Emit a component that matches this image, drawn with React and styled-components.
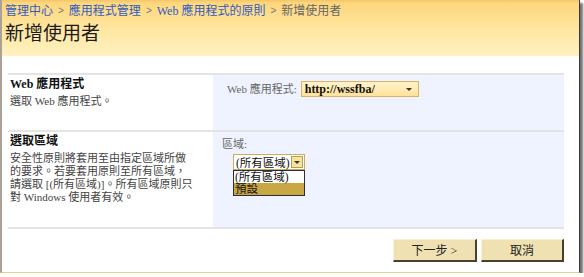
import styled, { createGlobalStyle } from "styled-components";

const Global = createGlobalStyle`
  html, body {
    margin: 0;
    padding: 0;
    background: #ffffff;
  }
  body {
    font-family: "Liberation Serif", "Noto Sans CJK TC", serif;
    color: #222;
  }
`;

const Frame = styled.div`
  box-sizing: border-box;
  width: 580px;
  height: 273px;
  background: #ffffff;
  border-left: 2px solid #aaa299;
  border-right: 1px solid #3a3a3a;
  border-bottom: 1px solid #e2d28c;
  box-shadow: 3px 3px 2px rgba(0, 0, 0, 0.55);
  display: flex;
  flex-direction: column;
`;

const Header = styled.div`
  height: 56px;
  padding: 2px 0 0 3px;
  box-sizing: border-box;
  background: linear-gradient(to bottom, #f3c56a 0px, #fdd67c 3px, #ffe7a2 30px, #fff1c0 56px);
`;

const Crumbs = styled.div`
  display: flex;
  align-items: center;
  height: 16px;
  font-size: 12px;
  white-space: nowrap;
`;

const Crumb = styled.span`
  color: ${(p) => (p.$current ? "#666" : "#2f5cc4")};
`;

const Sep = styled.span`
  font-family: "Liberation Sans", sans-serif;
  font-size: 10px;
  color: #777;
  padding: 0 5px;
`;

const Title = styled.h1`
  margin: 2px 0 0 0;
  font-family: "Noto Sans CJK TC", sans-serif;
  font-weight: 400;
  font-size: 19px;
  line-height: 24px;
  color: #1a1a1a;
`;

const Body = styled.div`
  padding: 17px 15px 0 6px;
  display: flex;
  flex-direction: column;
`;

const Section = styled.div`
  display: flex;
  height: ${(p) => p.$h}px;
  border-top: 2px solid #e4e4e4;
  ${(p) => p.$last && "border-bottom: 2px solid #e4e4e4;"}
`;

const Info = styled.div`
  width: 203px;
  padding: 1px 0 0 2px;
`;

const InfoTitle = styled.div`
  font-weight: 700;
  font-size: 12px;
  line-height: 16px;
  color: #111;
`;

const InfoText = styled.div`
  margin-top: 3px;
  font-size: 11px;
  line-height: 13px;
  color: #444;
`;

const Control = styled.div`
  flex: 1;
  background: #eff3ff;
  padding: ${(p) => p.$pad};
`;

const Field = styled.div`
  display: flex;
  align-items: center;
  gap: 4px;
`;

const FieldLabel = styled.div`
  font-size: 11px;
  line-height: 14px;
  color: #666;
`;

const UrlSelect = styled.div`
  box-sizing: border-box;
  width: 118px;
  height: 16px;
  border: 1px solid #d9b466;
  background: linear-gradient(to bottom, #fff3cc, #ffe29a);
  display: flex;
  align-items: center;
  justify-content: space-between;
  padding: 0 6px 0 3px;
  font-weight: 700;
  font-size: 12px;
  color: #111;
`;

const Caret = styled.span`
  width: 0;
  height: 0;
  border-left: 3px solid transparent;
  border-right: 3px solid transparent;
  border-top: 3px solid #333;
`;

const ZoneWrap = styled.div`
  position: relative;
  margin: 3px 0 0 11px;
  width: 72px;
`;

const ZoneSelect = styled.div`
  box-sizing: border-box;
  height: 16px;
  border: 1px solid #c8ad5c;
  background: #fff;
  display: flex;
  align-items: center;
  justify-content: space-between;
  padding-left: 2px;
  font-size: 11.5px;
  white-space: nowrap;
  color: #111;
`;

const ArrowBox = styled.span`
  box-sizing: border-box;
  flex: none;
  width: 12px;
  height: 12px;
  margin-right: 1px;
  background: #f6e49c;
  border: 1px solid #b89c50;
  display: flex;
  align-items: center;
  justify-content: center;
`;

const List = styled.div`
  position: absolute;
  top: 16px;
  left: 0;
  width: 72px;
  box-sizing: border-box;
  border: 1px solid #2b2b3a;
  background: #fff;
`;

const Option = styled.div`
  height: 12px;
  line-height: 12px;
  font-size: 11.5px;
  white-space: nowrap;
  padding-left: 1px;
  color: #111;
  background: ${(p) => (p.$active ? "#c9a744" : "#fff")};
`;

const Buttons = styled.div`
  display: flex;
  justify-content: flex-end;
  gap: 4px;
  margin-top: 10px;
`;

const Button = styled.button`
  width: ${(p) => p.$w}px;
  height: 23px;
  box-sizing: border-box;
  background: #efe1b2;
  border: 1px solid #f8f0d4;
  border-right: 2px solid #4a4030;
  border-bottom: 2px solid #4a4030;
  font-family: "Liberation Serif", "Noto Sans CJK TC", serif;
  font-size: 12px;
  color: #222;
  padding: 0;
`;

export default function App() {
  return (
    <>
      <Global />
      <Frame>
        <Header>
          <Crumbs>
            <Crumb>管理中心</Crumb>
            <Sep>&gt;</Sep>
            <Crumb>應用程式管理</Crumb>
            <Sep>&gt;</Sep>
            <Crumb>Web 應用程式的原則</Crumb>
            <Sep>&gt;</Sep>
            <Crumb $current>新增使用者</Crumb>
          </Crumbs>
          <Title>新增使用者</Title>
        </Header>
        <Body>
          <Section $h={55}>
            <Info>
              <InfoTitle>Web 應用程式</InfoTitle>
              <InfoText>選取 Web 應用程式。</InfoText>
            </Info>
            <Control $pad="6px 0 0 14px">
              <Field>
                <FieldLabel>Web 應用程式:</FieldLabel>
                <UrlSelect>
                  http://wssfba/
                  <Caret />
                </UrlSelect>
              </Field>
            </Control>
          </Section>
          <Section $h={95} $last>
            <Info>
              <InfoTitle>選取區域</InfoTitle>
              <InfoText>
                安全性原則將套用至由指定區域所做
                <br />
                的要求。若要套用原則至所有區域，
                <br />
                請選取 [(所有區域)]。所有區域原則只
                <br />
                對 Windows 使用者有效。
              </InfoText>
            </Info>
            <Control $pad="5px 0 0 9px">
              <FieldLabel>區域:</FieldLabel>
              <ZoneWrap>
                <ZoneSelect>
                  (所有區域)
                  <ArrowBox>
                    <Caret />
                  </ArrowBox>
                </ZoneSelect>
                <List>
                  <Option>(所有區域)</Option>
                  <Option $active>預設</Option>
                </List>
              </ZoneWrap>
            </Control>
          </Section>
          <Buttons>
            <Button $w={84}>下一步 &gt;</Button>
            <Button $w={83}>取消</Button>
          </Buttons>
        </Body>
      </Frame>
    </>
  );
}
